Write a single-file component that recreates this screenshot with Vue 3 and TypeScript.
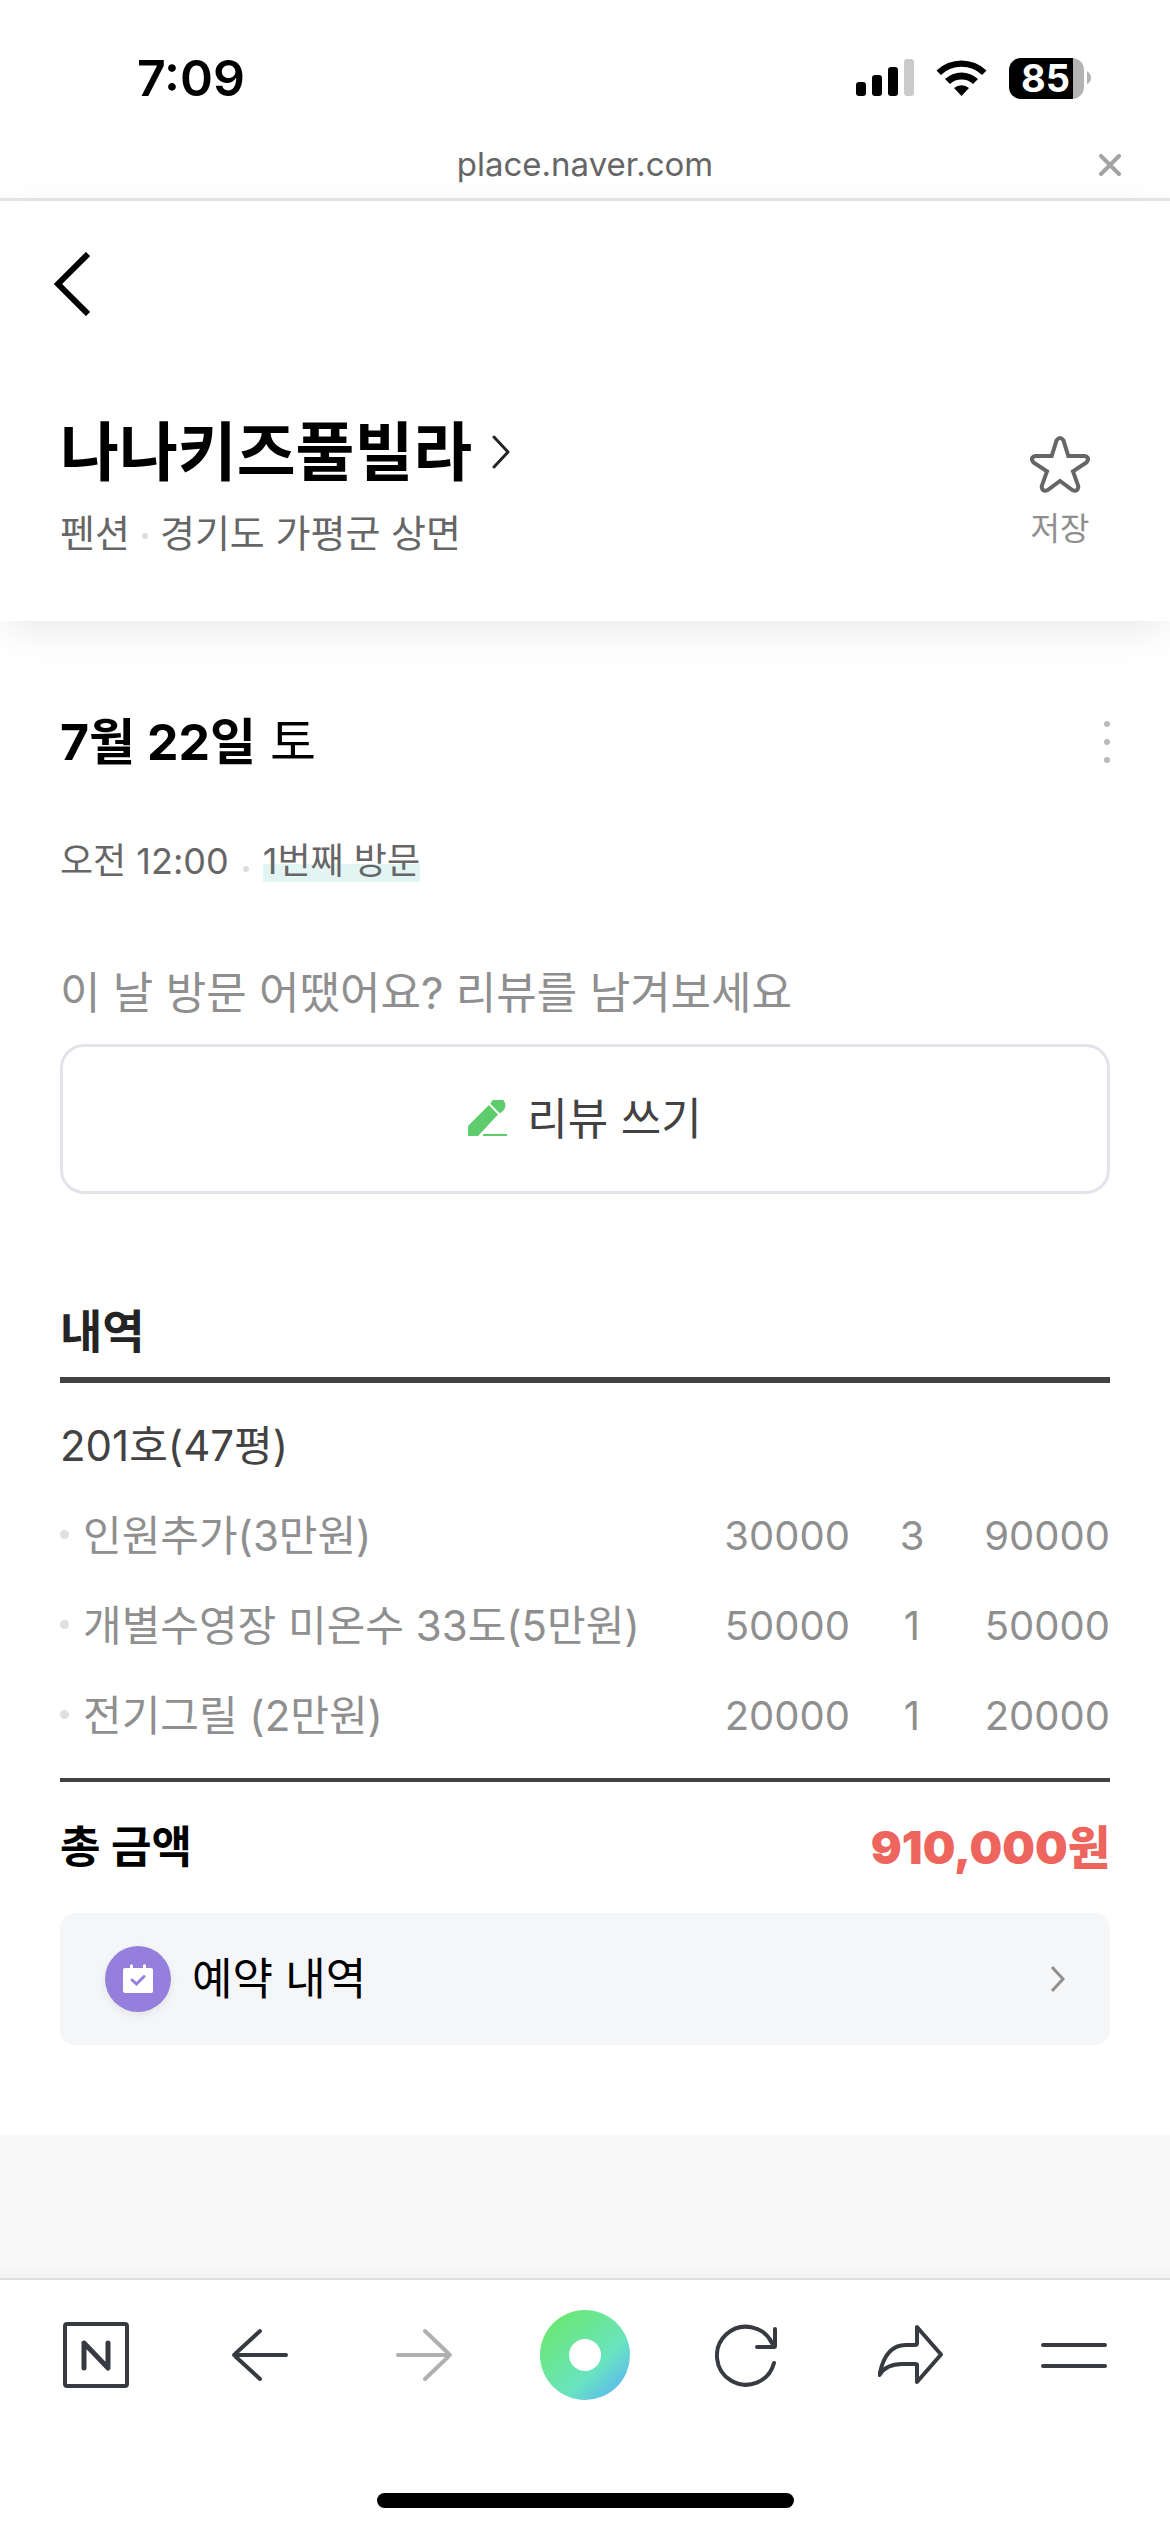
<script setup lang="ts">
interface OptionRow {
  name: string
  price: number
  count: number
  amount: number
}

const options: OptionRow[] = [
  { name: '인원추가(3만원)', price: 30000, count: 3, amount: 90000 },
  { name: '개별수영장 미온수 33도(5만원)', price: 50000, count: 1, amount: 50000 },
  { name: '전기그릴 (2만원)', price: 20000, count: 1, amount: 20000 },
]
</script>

<template>
  <div class="screen">
    <div class="status">
      <span class="clock">7:09</span>
      <div class="indicators">
        <svg class="signal" width="58" height="38" viewBox="0 0 58 38" aria-hidden="true">
          <rect x="0" y="23" width="10" height="14" rx="3" />
          <rect x="16" y="16" width="10" height="21" rx="3" />
          <rect x="32" y="8" width="10" height="29" rx="3" />
          <rect x="48" y="0" width="10" height="37" rx="3" fill="#cbcbcb" />
        </svg>
        <svg class="wifi" width="51" height="38" viewBox="0 0 51 38" aria-hidden="true">
          <path d="M0.500 11.500 A36 36 0 0 1 50.500 11.500 L46 16 A29.500 29.500 0 0 0 5 16 Z" />
          <path d="M9 20 A24 24 0 0 1 42 20 L37 25 A17 17 0 0 0 14 25 Z" />
          <path d="M18 29 A11.500 11.500 0 0 1 33 29 L25.500 37 Z" />
        </svg>
        <div class="battery">
          <span class="level">85</span>
          <svg class="tip" width="4" height="14" viewBox="0 0 4 14" aria-hidden="true">
            <path d="M0 0 Q4 3 4 7 Q4 11 0 13 Z" fill="#b3b3b3" />
          </svg>
        </div>
      </div>
    </div>

    <div class="address">
      <span class="host">place.naver.com</span>
      <button class="close" type="button" aria-label="닫기">
        <svg width="22" height="22" viewBox="0 0 22 22"><path d="M2 2 L20 20 M20 2 L2 20" fill="none" stroke="#a3a3a3" stroke-width="4" stroke-linecap="round" /></svg>
      </button>
    </div>

    <header class="head">
      <nav class="back-row">
        <button class="back" type="button" aria-label="뒤로">
          <svg width="37" height="64" viewBox="0 0 37 64"><path d="M35 2 L5 32 L35 62" fill="none" stroke="#000" stroke-width="6" /></svg>
        </button>
      </nav>
      <div class="place">
        <div class="place-text">
          <h1><a href="#place">나나키즈풀빌라<svg class="title-arrow" width="18" height="34" viewBox="0 0 18 34" aria-hidden="true"><path d="M2 2 L16 17 L2 32" fill="none" stroke="#242424" stroke-width="3" stroke-linecap="round" stroke-linejoin="round" /></svg></a></h1>
          <p class="kind">펜션<i class="dot"></i>경기도 가평군 상면</p>
        </div>
        <button class="save" type="button">
          <svg width="60" height="58" viewBox="0 0 60 58" aria-hidden="true"><path d="M26.600 5.200 Q30 0.800 33.400 5.200 L38.300 21 L54.500 21 Q60.500 22.500 56.500 27.400 L43 36.300 L48.300 51.200 Q48 57.500 42.300 55 L30 46 L17.700 55 Q12 57.500 11.700 51.200 L17 36.300 L3.500 27.400 Q-0.500 22.500 5.500 21 L21.700 21 Z" fill="none" stroke="#666" stroke-width="4" /></svg>
          저장
        </button>
      </div>
    </header>

    <main class="visit">
      <div class="date-row">
        <h2><b>7월 22일</b> 토</h2>
        <button class="more" type="button" aria-label="더보기">
          <svg width="6" height="42" viewBox="0 0 6 42"><g fill="#bababa"><circle cx="3" cy="3" r="3" /><circle cx="3" cy="21" r="3" /><circle cx="3" cy="39" r="3" /></g></svg>
        </button>
      </div>
      <p class="meta">오전 12:00<i class="dot"></i><mark>1번째 방문</mark></p>

      <p class="prompt">이 날 방문 어땠어요? 리뷰를 남겨보세요</p>
      <button class="review" type="button">
        <svg width="39" height="38" viewBox="0 0 39 38" aria-hidden="true"><g fill="#5ecb6c"><path d="M0 36 V26 L21 5 L30 14.500 L10 36 Z" /><path d="M22.500 4 A7.500 7.500 0 1 1 33.500 12 L32 13.500 Z" /><rect x="15" y="34" width="24" height="2" /></g></svg>
        리뷰 쓰기
      </button>

      <h3>내역</h3>
      <table>
        <tbody>
          <tr class="room"><th scope="rowgroup" colspan="4">201호(47평)</th></tr>
          <tr v-for="row in options" :key="row.name">
            <th scope="row"><span class="option">{{ row.name }}</span></th>
            <td class="price">{{ row.price }}</td>
            <td class="count">{{ row.count }}</td>
            <td class="amount">{{ row.amount }}</td>
          </tr>
        </tbody>
      </table>
      <p class="total"><span>총 금액</span><strong>910,000원</strong></p>

      <a class="booking" href="#booking">
        <span class="badge">
          <svg width="30" height="30" viewBox="0 0 30 30" aria-hidden="true"><path d="M2 4 H7 V1.500 Q8.500 -1 10 1.500 V4 H20 V1.500 Q21.500 -1 23 1.500 V4 H28 Q30 4 30 6 V27 Q30 29 28 29 H2 Q0 29 0 27 V6 Q0 4 2 4 Z" fill="#fff" /><path d="M9 16 L13.500 20 L21 12.500" fill="none" stroke="#957fdc" stroke-width="3" stroke-linecap="round" /></svg>
        </span>
        예약 내역
        <svg class="go" width="14" height="26" viewBox="0 0 14 26" aria-hidden="true"><path d="M1 1 L12 13 L1 25" fill="none" stroke="#8f8f8f" stroke-width="3" /></svg>
      </a>
    </main>

    <div class="rest"></div>

    <footer>
      <nav class="tools">
        <button type="button" aria-label="홈">
          <svg width="66" height="66" viewBox="0 0 66 66"><rect x="2" y="2" width="62" height="62" rx="2" /><path d="M21 46 V21 L45 46 V21" stroke-width="5" /></svg>
        </button>
        <button type="button" aria-label="이전">
          <svg width="66" height="66" viewBox="0 0 66 66"><path d="M60 33 H8 M34 9 L10 31 Q8 33 10 35 L34 57" /></svg>
        </button>
        <button type="button" aria-label="다음" disabled>
          <svg width="66" height="66" viewBox="0 0 66 66"><path d="M9 33 H61 M36 9 L59 31 Q61 33 59 35 L36 57" /></svg>
        </button>
        <button type="button" aria-label="그린닷">
          <svg class="green" width="90" height="90" viewBox="0 0 90 90">
            <defs>
              <linearGradient id="dotFill" x1="0.150" y1="0.100" x2="0.880" y2="0.880">
                <stop offset="0" stop-color="#6ae874" />
                <stop offset="0.680" stop-color="#6ae3c0" />
                <stop offset="1" stop-color="#5cbcec" />
              </linearGradient>
            </defs>
            <circle cx="45" cy="45" r="45" fill="url(#dotFill)" /><circle cx="45" cy="45" r="16" fill="#fff" />
          </svg>
        </button>
        <button type="button" aria-label="새로고침">
          <svg width="66" height="66" viewBox="0 0 66 66"><path d="M59 41 A29 29 0 1 1 57 21 M60 7 V24 Q60 25 59 25 H42" /></svg>
        </button>
        <button type="button" aria-label="공유">
          <svg width="66" height="66" viewBox="0 0 66 66"><path d="M39 5 L63 32.500 L39 60 V43 Q39 42 37 42 H24 Q8 42 1.500 53 Q7 23 28 23 H37 Q39 23 39 21 Z" /></svg>
        </button>
        <button type="button" aria-label="메뉴">
          <svg width="66" height="66" viewBox="0 0 66 66"><path d="M2 23 H64 M2 44 H64" /></svg>
        </button>
      </nav>
      <div class="home-bar"></div>
    </footer>
  </div>
</template>

<style>
body {
  margin: 0;
  background: #fff;
}
</style>

<style scoped>
.screen {
  display: flex;
  flex-direction: column;
  min-height: 100vh;
  font-family: Inter, "Noto Sans CJK KR", sans-serif;
  color: #000;
}
h1, h2, h3, p {
  margin: 0;
  font-weight: 400;
}
button {
  display: flex;
  align-items: center;
  justify-content: center;
  padding: 0;
  border: 0;
  background: none;
  font: inherit;
  color: inherit;
}
a {
  color: inherit;
  text-decoration: none;
}
svg {
  display: block;
  flex: none;
}

.status {
  display: flex;
  align-items: center;
  justify-content: space-between;
  height: 108px;
  padding: 24px 79px 0 137px;
}
.clock {
  font-size: 50px;
  font-weight: 600;
}
.indicators {
  display: flex;
  align-items: center;
}
.wifi {
  margin: 0 22px;
}
.battery {
  display: flex;
  align-items: center;
  gap: 3px;
}
.level {
  box-sizing: border-box;
  width: 75px;
  height: 41px;
  padding-left: 12px;
  border-radius: 12px;
  background: linear-gradient(90deg, #000 64px, #b3b3b3 64px);
  color: #fff;
  font-size: 38px;
  font-weight: 700;
  line-height: 41px;
}

.address {
  display: grid;
  grid-template-columns: 1fr auto 1fr;
  align-items: center;
  height: 66px;
  padding: 0 49px;
  border-bottom: 3px solid #e5e5e5;
}
.host {
  grid-column: 2;
  padding-bottom: 2px;
  color: #666;
  font-size: 33px;
  line-height: 40px;
}
.close {
  justify-self: end;
}

.head {
  background: #fff;
  box-shadow: 0 12px 40px -6px rgba(0, 0, 0, 0.1);
}
.back-row {
  display: flex;
  align-items: center;
  height: 165px;
  padding-left: 53px;
}
.place {
  display: flex;
  justify-content: space-between;
  padding: 50px 80px 61px 60px;
}
h1 {
  font-size: 64px;
  font-weight: 700;
  line-height: 72px;
}
h1 a {
  display: flex;
  align-items: center;
  gap: 20px;
}
.kind {
  display: flex;
  align-items: center;
  margin-top: 18px;
  color: #666;
  font-size: 38px;
  line-height: 54px;
}
.dot {
  width: 6px;
  height: 6px;
  margin: 6px 12px 0;
  border-radius: 50%;
  background: #dcdcdc;
}
.save {
  flex-direction: column;
  justify-content: flex-start;
  gap: 15px;
  padding-top: 19px;
  color: #8f8f8f;
  font-size: 32px;
  line-height: 42px;
}

.visit {
  padding: 85px 60px 90px;
}
.date-row {
  display: flex;
  align-items: center;
  justify-content: space-between;
}
h2 {
  font-size: 50px;
  line-height: 72px;
}
.meta {
  display: flex;
  align-items: center;
  margin-top: 56px;
  color: #666;
  font-size: 36px;
  line-height: 54px;
}
.meta .dot {
  margin: 15px 14px 0;
}
mark {
  background: linear-gradient(transparent 30px, #e3f5f3 30px, #e3f5f3 48px, transparent 48px);
  color: inherit;
}
.prompt {
  margin-top: 75px;
  color: #8f8f8f;
  font-size: 44px;
  line-height: 60px;
}
.review {
  box-sizing: border-box;
  gap: 20px;
  width: 100%;
  height: 150px;
  margin-top: 21px;
  border: 3px solid #e3e3e9;
  border-radius: 24px;
  color: #424242;
  font-size: 44px;
  line-height: 60px;
}
h3 {
  margin-top: 107px;
  padding-bottom: 16px;
  border-bottom: 6px solid #424242;
  color: #242424;
  font-size: 46px;
  font-weight: 700;
  line-height: 60px;
}
table {
  width: 100%;
  margin: 18px 0 17px;
  border-spacing: 0;
  color: #8f8f8f;
  font-size: 40px;
}
th, td {
  height: 90px;
  padding: 0;
  font-weight: 400;
  line-height: 60px;
}
th {
  font-size: 42px;
  text-align: left;
}
.room th {
  color: #424242;
}
.option {
  display: flex;
  align-items: center;
  gap: 14px;
}
.option::before {
  content: "";
  width: 9px;
  height: 9px;
  margin-bottom: 4px;
  border-radius: 50%;
  background: #e0e0e0;
}
.price, .amount {
  text-align: right;
}
.count {
  width: 124px;
  text-align: center;
}
.amount {
  width: 136px;
}
.total {
  display: flex;
  align-items: center;
  justify-content: space-between;
  padding: 35px 0 36px;
  border-top: 4px solid #424242;
  font-size: 44px;
  font-weight: 700;
  line-height: 60px;
}
.total strong {
  color: #ee655e;
  font-size: 46px;
}
.booking {
  display: flex;
  align-items: center;
  height: 132px;
  padding: 0 45px;
  border-radius: 15px;
  background: #f5f6f8;
  font-size: 44px;
  line-height: 60px;
}
.badge {
  display: flex;
  align-items: center;
  justify-content: center;
  width: 66px;
  height: 66px;
  margin-right: 21px;
  border-radius: 50%;
  background: #957fdc;
  box-shadow: 0 3px 9px rgba(0, 0, 0, 0.08);
}
.go {
  margin-left: auto;
}

.rest {
  flex: 1;
  min-height: 60px;
  background: linear-gradient(0deg, #f1f3f2, #f9f9f9 15px);
}
footer {
  border-top: 2px solid #dfdfdf;
  background: #fff;
}
.tools {
  display: flex;
  height: 150px;
  padding: 0 14px;
}
.tools button {
  flex: 1;
}
.tools svg {
  fill: none;
  stroke: #373a40;
  stroke-width: 4;
  stroke-linecap: round;
  stroke-linejoin: round;
}
.tools .green {
  stroke: none;
}
.tools button:disabled svg {
  stroke: #b0b0b2;
}
.home-bar {
  width: 36%;
  max-width: 417px;
  height: 15px;
  margin: 63px auto 24px;
  border-radius: 8px;
  background: #000;
}
</style>
